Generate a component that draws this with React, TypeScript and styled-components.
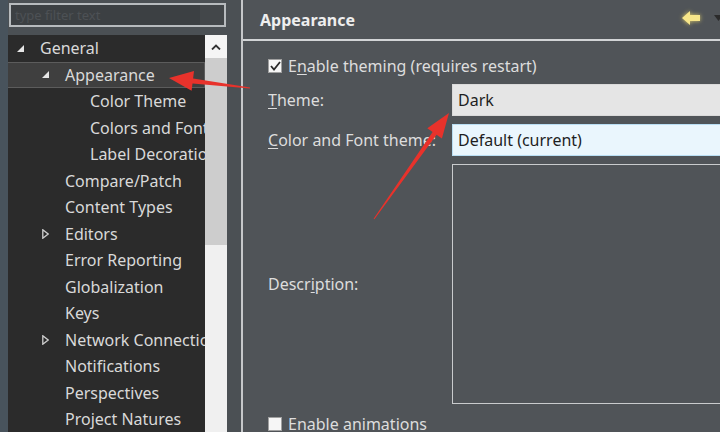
import styled, { createGlobalStyle } from "styled-components";

const GlobalStyle = createGlobalStyle`
  html, body {
    margin: 0;
    padding: 0;
    background: #505458;
  }
  body {
    font-family: "Noto Sans", "Open Sans", sans-serif;
    font-size: 16px;
  }
`;

const Window = styled.div`
  position: relative;
  display: flex;
  width: 720px;
  height: 432px;
  overflow: hidden;
  background: #505458;
`;

const Sidebar = styled.div`
  width: 233px;
  flex-shrink: 0;
  display: flex;
  flex-direction: column;
  padding: 3px 0 0 8px;
  background: #4b5054;
  border-right: 2px solid #c6c8ca;
  box-shadow: inset 8px 0 0 #48535c;
`;

const SearchBox = styled.div`
  margin-left: 1px;
  width: 217px;
  height: 24px;
  box-sizing: border-box;
  border: 2px solid #b7bbbe;
  background: #3c4043;
  display: flex;
  align-items: center;
  justify-content: space-between;
  padding-left: 4px;
  color: #4d5155;
  font-size: 13px;
`;

const SearchClear = styled.div`
  width: 24px;
  height: 100%;
  background: #43474a;
`;

const TreeFrame = styled.div`
  display: flex;
  width: 219px;
  margin-top: 8px;
  flex: 1;
  min-height: 0;
`;

const TreeList = styled.div`
  flex: 1;
  background: #2b2b2b;
  overflow: hidden;
  white-space: nowrap;
`;

const Row = styled.div<{ $level: number; $selected?: boolean }>`
  height: 26.5px;
  box-sizing: border-box;
  display: flex;
  align-items: center;
  padding-left: ${(p) => 9 + p.$level * 25}px;
  color: #d9d9d9;
  background: ${(p) => (p.$selected ? "#3f3f3f" : "transparent")};
  border: 1px solid ${(p) => (p.$selected ? "#5c5c5c" : "transparent")};
  border-left: none;
`;

const Expander = styled.span`
  width: 23px;
  flex-shrink: 0;
  display: flex;
  align-items: center;
`;

const Scrollbar = styled.div`
  width: 22px;
  display: flex;
  flex-direction: column;
  background: #f0f0f0;
`;

const ScrollButton = styled.div`
  height: 23px;
  background: #f5f5f5;
  display: flex;
  align-items: center;
  justify-content: center;
`;

const ScrollThumb = styled.div`
  height: 187px;
  background: #cdcdcd;
`;

const Main = styled.div`
  flex: 1;
  display: flex;
  flex-direction: column;
  background: #505458;
  min-width: 0;
  overflow: hidden;
`;

const Header = styled.div`
  height: 39px;
  flex-shrink: 0;
  display: flex;
  align-items: center;
  justify-content: space-between;
  padding-left: 17px;
  border-bottom: 2px solid #d2d4d6;
`;

const Title = styled.div`
  font-weight: 700;
  font-size: 16px;
  color: #eeeeee;
`;

const HeaderTools = styled.div`
  display: flex;
  align-items: center;
  gap: 13px;
  margin-right: -3px;
  margin-top: -4px;
`;

const Content = styled.div`
  display: grid;
  grid-template-columns: 184px 1fr;
  row-gap: 8px;
  padding: 17px 0 0 25px;
  color: #dddddd;
  white-space: nowrap;
`;

const CheckRow = styled.label`
  grid-column: 1 / -1;
  display: flex;
  align-items: center;
  gap: 6px;
  height: 16px;
  margin-bottom: 2px;
`;

const BottomCheck = styled(CheckRow)`
  margin-top: 4px;
  margin-bottom: 0;
`;

const Box = styled.span<{ $checked?: boolean }>`
  width: 14px;
  height: 14px;
  box-sizing: border-box;
  background: #f6f6f6;
  border: 1px solid #a0a0a0;
  display: flex;
  align-items: center;
  justify-content: center;
`;

const FieldLabel = styled.div`
  display: flex;
  align-items: center;
  overflow: hidden;
`;

const Combo = styled.div<{ $focused?: boolean }>`
  height: 32px;
  box-sizing: border-box;
  display: flex;
  align-items: center;
  padding-left: 5px;
  color: #1e1e1e;
  background: ${(p) => (p.$focused ? "#eaf6fd" : "#e5e5e5")};
  border: 1px solid ${(p) => (p.$focused ? "#b9def3" : "#dadada")};
  border-right: none;
`;

const DescriptionBox = styled.div`
  height: 240px;
  box-sizing: border-box;
  border: 1px solid #c9cbcd;
  border-right: none;
`;

const U = styled.span`
  text-decoration: underline;
  text-underline-offset: 2px;
`;

const Overlay = styled.svg`
  position: absolute;
  left: 0;
  top: 0;
  pointer-events: none;
`;

interface TreeItem {
  label: string;
  level: number;
  expander?: "open" | "closed";
  selected?: boolean;
}

const items: TreeItem[] = [
  { label: "General", level: 0, expander: "open" },
  { label: "Appearance", level: 1, expander: "open", selected: true },
  { label: "Color Theme", level: 2 },
  { label: "Colors and Fonts", level: 2 },
  { label: "Label Decorations", level: 2 },
  { label: "Compare/Patch", level: 1 },
  { label: "Content Types", level: 1 },
  { label: "Editors", level: 1, expander: "closed" },
  { label: "Error Reporting", level: 1 },
  { label: "Globalization", level: 1 },
  { label: "Keys", level: 1 },
  { label: "Network Connections", level: 1, expander: "closed" },
  { label: "Notifications", level: 1 },
  { label: "Perspectives", level: 1 },
  { label: "Project Natures", level: 1 },
];

function Triangle({ open }: { open: boolean }) {
  if (open) {
    return (
      <svg width="7" height="7" viewBox="0 0 7 7">
        <polygon points="7,0 7,7 0,7" fill="#e6e6e6" />
      </svg>
    );
  }
  return (
    <svg width="7" height="10" viewBox="0 0 7 10">
      <polygon points="0.8,0.8 6.2,5 0.8,9.2" fill="none" stroke="#cfcfcf" strokeWidth="1.3" />
    </svg>
  );
}

function Check({ checked }: { checked?: boolean }) {
  return (
    <Box $checked={checked}>
      {checked && (
        <svg width="11" height="10" viewBox="0 0 11 10">
          <path d="M1 5 L4 8.5 L10 1" fill="none" stroke="#2a2a2a" strokeWidth="1.8" />
        </svg>
      )}
    </Box>
  );
}

export default function App() {
  return (
    <>
      <GlobalStyle />
      <Window>
        <Sidebar>
          <SearchBox>
            type filter text
            <SearchClear />
          </SearchBox>
          <TreeFrame>
            <TreeList>
              {items.map((it) => (
                <Row key={it.label} $level={it.level} $selected={it.selected}>
                  <Expander>{it.expander && <Triangle open={it.expander === "open"} />}</Expander>
                  {it.label}
                </Row>
              ))}
            </TreeList>
            <Scrollbar>
              <ScrollButton>
                <svg width="10" height="6" viewBox="0 0 10 6">
                  <path d="M1 5.5 L5 1.5 L9 5.5" fill="none" stroke="#333" strokeWidth="1.8" />
                </svg>
              </ScrollButton>
              <ScrollThumb />
            </Scrollbar>
          </TreeFrame>
        </Sidebar>

        <Main>
          <Header>
            <Title>Appearance</Title>
            <HeaderTools>
              <svg width="19" height="14" viewBox="0 0 19 14" style={{ filter: "drop-shadow(0 0 2px #d8c86a)" }}>
                <polygon points="0,7 8,0 8,4 18,4 18,10 8,10 8,14" fill="#f7e68a" />
              </svg>
              <svg width="9" height="6" viewBox="0 0 9 6">
                <polygon points="0,0 9,0 4.5,6" fill="#2b2b2b" />
              </svg>
            </HeaderTools>
          </Header>
          <Content>
            <CheckRow>
              <Check checked />
              <span>
                E<U>n</U>able theming (requires restart)
              </span>
            </CheckRow>
            <FieldLabel>
              <span>
                <U>T</U>heme:
              </span>
            </FieldLabel>
            <Combo>Dark</Combo>
            <FieldLabel>
              <span>
                <U>C</U>olor and Font theme:
              </span>
            </FieldLabel>
            <Combo $focused>Default (current)</Combo>
            <FieldLabel>
              <span>
                Descr<U>i</U>ption:
              </span>
            </FieldLabel>
            <DescriptionBox />
            <BottomCheck>
              <Check />
              <span>
                <U>E</U>nable animations
              </span>
            </BottomCheck>
          </Content>
        </Main>

        <Overlay width="720" height="432" viewBox="0 0 720 432">
          <polygon
            points="169,78 194,71 193.1,78.4 250.1,87.4 249.9,88.6 192.5,83.4 191.6,90.8"
            fill="#e8322b"
          />
          <polygon
            points="449,113 427.3,128.2 432.6,132 373.6,218.7 374.4,219.3 436.6,134.8 441.9,138.6"
            fill="#e8322b"
          />
        </Overlay>
      </Window>
    </>
  );
}
